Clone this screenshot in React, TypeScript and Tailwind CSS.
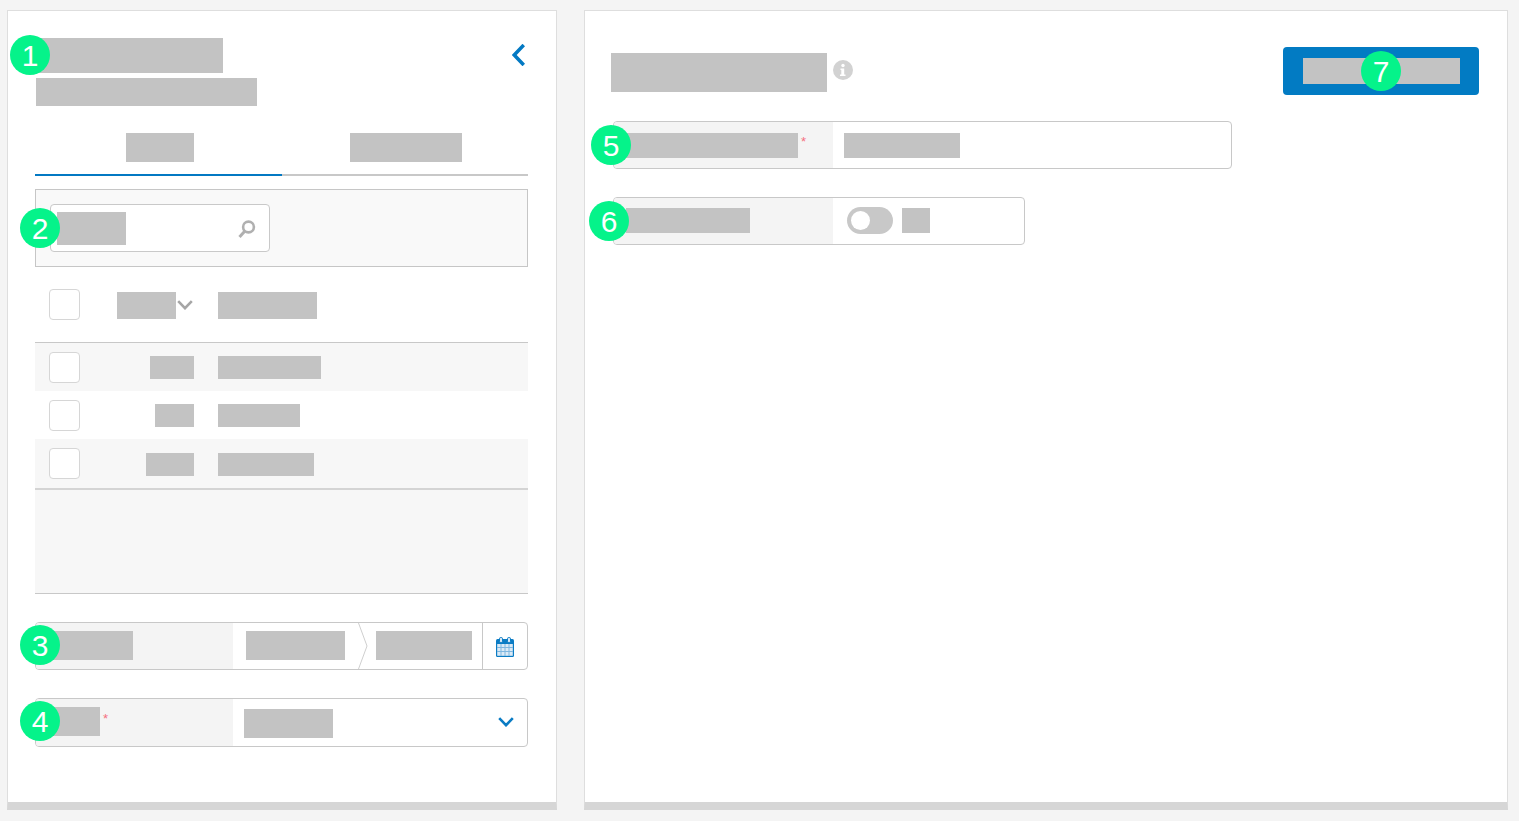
function Badge({ className, children }: { className: string; children: string }) {
  return (
    <div className={`absolute z-10 flex h-10 w-10 items-center justify-center rounded-full bg-[#05f38a] pt-[2px] text-[30px] leading-none text-white ${className}`}>
      {children}
    </div>
  )
}

function Checkbox() {
  return <div className="h-[31px] w-[31px] shrink-0 rounded-[4px] border border-[#d6d6d6] bg-white" />
}

function Chevron({ className, color }: { className: string; color: string }) {
  return (
    <svg className={className} viewBox="0 0 16 10" fill="none">
      <path d="M1.2 1.2 8 8.2l6.8-7" stroke={color} strokeWidth="2.6" />
    </svg>
  )
}

function Required({ className }: { className: string }) {
  return <span className={`text-[13px] leading-none text-[#f4707f] ${className}`}>*</span>
}

function CalendarIcon() {
  return (
    <svg className="mt-px h-5 w-[18px]" viewBox="0 0 18 20">
      <rect x="0" y="2" width="18" height="18" rx="1.5" fill="#0b7cc4" />
      <rect x="1.2" y="7" width="15.6" height="11.8" fill="#dbeaf6" />
      <path d="M5 7v12M9 7v12M13 7v12M1 10.5h16M1 14.5h16" stroke="#7fb7e0" strokeWidth="1" />
      <rect x="3.5" y="0.5" width="3" height="5" rx="1.2" fill="#dbeaf6" stroke="#0b7cc4" />
      <rect x="11.5" y="0.5" width="3" height="5" rx="1.2" fill="#dbeaf6" stroke="#0b7cc4" />
    </svg>
  )
}

export default function App() {
  return (
    <div className="relative flex min-h-[821px] items-start gap-[27px] overflow-hidden bg-[#f4f4f4] pl-[7px] pt-[10px] font-['Liberation_Sans',sans-serif]">
      {/* Left panel */}
      <div className="h-[800px] w-[550px] shrink-0 border border-b-8 border-[#dedede] border-b-[#d6d6d6] bg-white pl-[27px] pr-[28px] pt-[27px]">
        <div className="flex items-start justify-between pl-px">
          <div>
            <div className="h-[35px] w-[187px] bg-[#c3c3c3]" />
            <div className="mt-[5px] h-7 w-[221px] bg-[#c3c3c3]" />
          </div>
          <svg className="mr-[3px] mt-[6px] h-[22px] w-[13px]" viewBox="0 0 13 22" fill="none">
            <path d="M11.8 1 2.2 11l9.6 10" stroke="#0379c3" strokeWidth="3.6" />
          </svg>
        </div>

        {/* Tabs */}
        <div className="mt-[27px] flex">
          <div className="flex flex-1 justify-center border-b-2 border-[#0379c3] pb-3 pl-[3px]">
            <div className="h-[29px] w-[68px] bg-[#c3c3c3]" />
          </div>
          <div className="flex flex-1 justify-center border-b-2 border-[#c8c8c8] pb-3 pl-[2px]">
            <div className="h-[29px] w-28 bg-[#c3c3c3]" />
          </div>
        </div>

        {/* Search */}
        <div className="mt-[13px] h-[78px] border border-[#c6c6c6] bg-[#f9f9f9] pl-[14px] pt-[14px]">
          <div className="flex h-12 w-[220px] items-center justify-between rounded-[4px] border border-[#c9c9c9] bg-white pl-[6px] pr-[12px]">
            <div className="h-[33px] w-[69px] bg-[#c3c3c3]" />
            <svg className="mt-[2px] h-5 w-5" viewBox="0 0 20 20" fill="none">
              <circle cx="11.5" cy="8" r="5.4" stroke="#b0b0b0" strokeWidth="2.6" />
              <path d="M7.5 12.5 2.5 18" stroke="#b0b0b0" strokeWidth="3" />
            </svg>
          </div>
        </div>

        {/* Table */}
        <div className="flex h-[76px] items-center border-b border-[#c8c8c8] pl-[14px]">
          <Checkbox />
          <div className="flex w-[114px] items-center justify-end">
            <div className="mt-px h-[27px] w-[59px] bg-[#c3c3c3]" />
            <Chevron className="mx-[1px] h-[10px] w-4" color="#a6a6a6" />
          </div>
          <div className="ml-6 mt-px h-[27px] w-[99px] bg-[#c3c3c3]" />
        </div>
        <div className="flex h-12 items-center bg-[#f7f7f7] pl-[14px]">
          <Checkbox />
          <div className="flex w-[114px] justify-end">
            <div className="h-[23px] w-11 bg-[#c3c3c3]" />
          </div>
          <div className="ml-6 h-[23px] w-[103px] bg-[#c3c3c3]" />
        </div>
        <div className="flex h-12 items-center pl-[14px]">
          <Checkbox />
          <div className="flex w-[114px] justify-end">
            <div className="h-[23px] w-[39px] bg-[#c3c3c3]" />
          </div>
          <div className="ml-6 h-[23px] w-[82px] bg-[#c3c3c3]" />
        </div>
        <div className="flex h-[51px] items-center border-b-2 border-[#d4d4d4] bg-[#f7f7f7] pl-[14px]">
          <Checkbox />
          <div className="flex w-[114px] justify-end">
            <div className="mt-[2px] h-[23px] w-12 bg-[#c3c3c3]" />
          </div>
          <div className="ml-6 mt-[2px] h-[23px] w-[96px] bg-[#c3c3c3]" />
        </div>
        <div className="h-[104px] border-b border-[#c8c8c8] bg-[#f7f7f7]" />

        {/* Date range */}
        <div className="mt-[28px] flex h-12 overflow-hidden rounded-[4px] border border-[#c8c8c8]">
          <div className="flex w-[197px] items-start bg-[#f4f4f4] pl-[14px] pt-2">
            <div className="h-[29px] w-[83px] bg-[#c3c3c3]" />
          </div>
          <div className="flex flex-1 items-start">
            <div className="ml-[13px] mt-2 h-[29px] w-[99px] bg-[#c3c3c3]" />
            <svg className="ml-[13px] h-[46px] w-[10px]" viewBox="0 0 10 46" fill="none">
              <path d="M0.5 0 9 23 0.5 46" stroke="#cfcfcf" />
            </svg>
            <div className="ml-2 mt-2 h-[29px] w-[96px] bg-[#c3c3c3]" />
            <div className="ml-auto flex h-full w-[45px] items-center justify-center border-l border-[#c8c8c8]">
              <CalendarIcon />
            </div>
          </div>
        </div>

        {/* Select */}
        <div className="mt-[28px] flex h-[49px] overflow-hidden rounded-[4px] border border-[#c8c8c8]">
          <div className="flex w-[197px] items-start bg-[#f4f4f4] pl-[14px] pt-2">
            <div className="h-[29px] w-[50px] bg-[#c3c3c3]" />
            <Required className="ml-[3px] mt-[5px]" />
          </div>
          <div className="flex flex-1 items-center justify-between pr-[13px]">
            <div className="ml-[11px] mt-[1px] h-[29px] w-[89px] bg-[#c3c3c3]" />
            <Chevron className="mb-[2px] h-[10px] w-4" color="#0b7cc4" />
          </div>
        </div>
      </div>

      {/* Right panel */}
      <div className="h-[800px] w-[924px] shrink-0 border border-b-8 border-[#dedede] border-b-[#d6d6d6] bg-white pl-[26px] pr-[28px] pt-9">
        <div className="flex items-start justify-between">
          <div className="mt-[6px] flex items-start">
            <div className="h-[39px] w-[216px] bg-[#c3c3c3]" />
            <svg className="ml-[6px] mt-[7px] h-5 w-5" viewBox="0 0 20 20">
              <circle cx="10" cy="10" r="10" fill="#d2d2d2" />
              <circle cx="10" cy="5.5" r="1.7" fill="#fff" />
              <path d="M7.5 8.5h3.7v6h1.3v1.5h-5.5v-1.5h1.3v-4.5h-.8z" fill="#fff" />
            </svg>
          </div>
          <div className="flex h-12 w-[196px] items-start rounded-[4px] bg-[#027bc3] pl-5 pt-[11px]">
            <div className="h-[26px] w-[157px] bg-[#c3c3c3]" />
          </div>
        </div>

        <div className="ml-[2px] mt-[26px] flex h-12 w-[619px] overflow-hidden rounded-[4px] border border-[#c8c8c8]">
          <div className="flex w-[219px] items-start bg-[#f4f4f4] pl-3 pt-[11px]">
            <div className="h-[25px] w-[172px] bg-[#c3c3c3]" />
            <Required className="ml-[3px] mt-[2px]" />
          </div>
          <div className="ml-[11px] mt-[11px] h-[25px] w-[116px] bg-[#c3c3c3]" />
        </div>

        <div className="ml-[2px] mt-[28px] flex h-12 w-[412px] overflow-hidden rounded-[4px] border border-[#c8c8c8]">
          <div className="flex w-[219px] items-start bg-[#f4f4f4] pl-3 pt-[10px]">
            <div className="h-[25px] w-[124px] bg-[#c3c3c3]" />
          </div>
          <div className="ml-[14px] mt-[9px] flex h-[27px] w-[46px] items-center rounded-full bg-[#c8c8c8] pl-1">
            <div className="h-[19px] w-[19px] rounded-full bg-white" />
          </div>
          <div className="ml-[9px] mt-[10px] h-[25px] w-7 bg-[#c3c3c3]" />
        </div>
      </div>

      {/* Step markers */}
      <Badge className="left-[10px] top-[35px]">1</Badge>
      <Badge className="left-[20px] top-[208px]">2</Badge>
      <Badge className="left-[20px] top-[625px]">3</Badge>
      <Badge className="left-[20px] top-[701px]">4</Badge>
      <Badge className="left-[591px] top-[125px]">5</Badge>
      <Badge className="left-[589px] top-[201px]">6</Badge>
      <Badge className="left-[1361px] top-[51px]">7</Badge>
    </div>
  )
}
